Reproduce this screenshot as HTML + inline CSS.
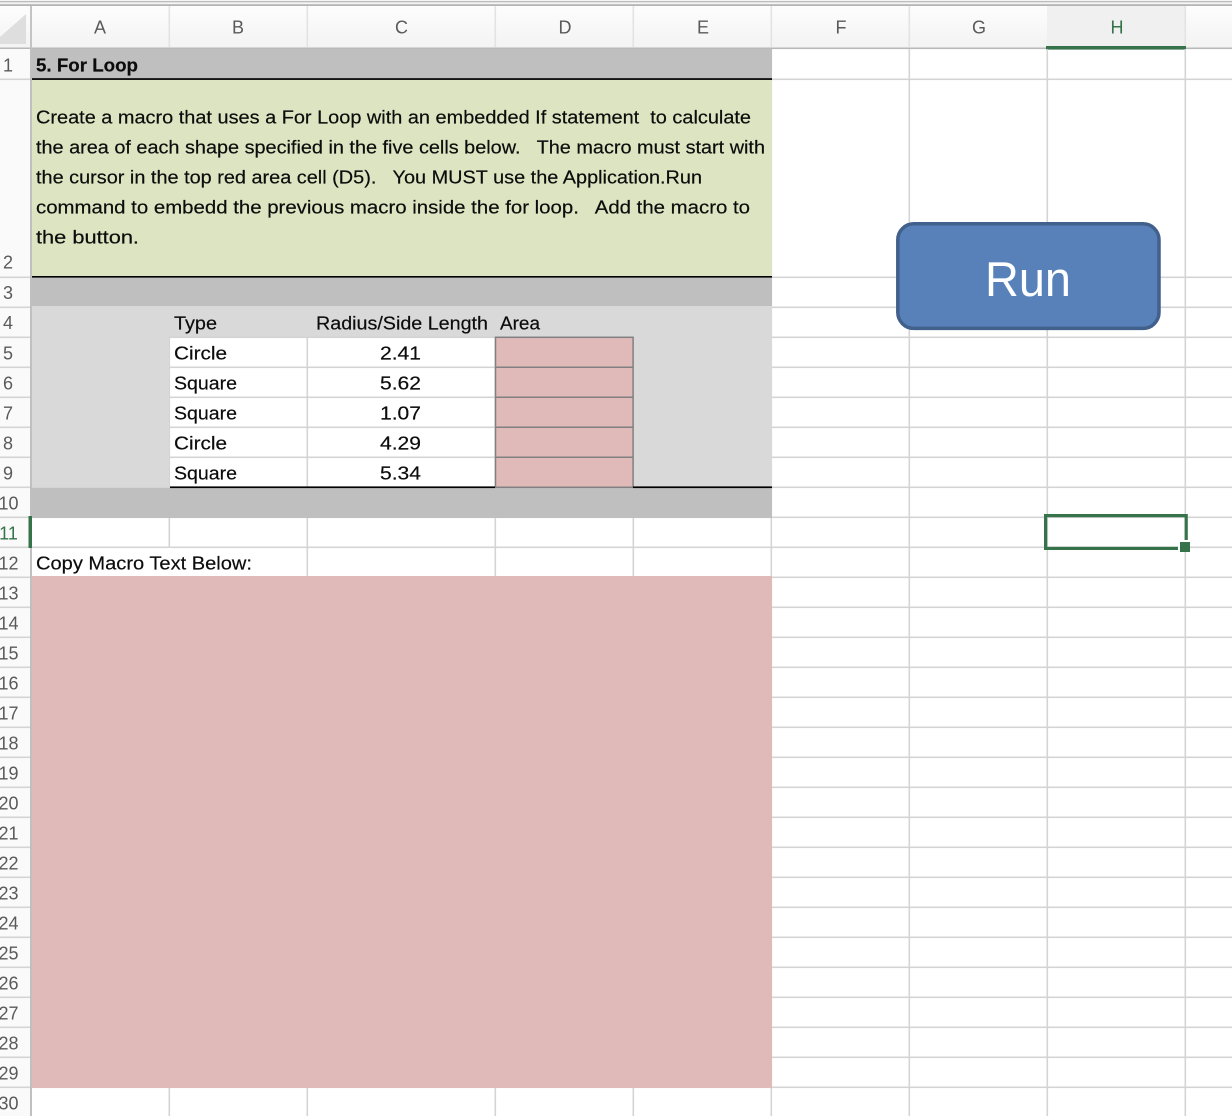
<!DOCTYPE html>
<html><head><meta charset="utf-8"><title>For Loop</title>
<style>
html,body{margin:0;padding:0;background:#fff;width:1232px;height:1116px;overflow:hidden}
svg{display:block}
text{font-family:"Liberation Sans",sans-serif;font-size:18px;fill:#111;white-space:pre;transform:translateY(-.6px);stroke:currentColor;stroke-width:0}
.b{fill:#0c0c0c;stroke:#0c0c0c;stroke-width:.18px}
.h{fill:#5a5a5a;text-anchor:middle}
.n{fill:#5a5a5a;text-anchor:middle}
</style></head><body>
<svg width="1232" height="1116" viewBox="0 0 1232 1116" xmlns="http://www.w3.org/2000/svg">
<defs><linearGradient id="hd" x1="0" y1="0" x2="0" y2="1"><stop offset="0" stop-color="#fdfdfd"/><stop offset="1" stop-color="#f3f3f3"/></linearGradient></defs>
<!-- top chrome -->
<rect x="0" y="0" width="1232" height="6" fill="#f4f4f4"/>
<rect x="0" y="1" width="1232" height="1.3" fill="#bdbdbd"/>
<rect x="0" y="4.3" width="1232" height="1.6" fill="#adadad"/>
<!-- column header -->
<rect x="0" y="6" width="1232" height="42" fill="url(#hd)"/>
<rect x="1047" y="6" width="138.5" height="41" fill="#f0f0f0"/>
<path d="M26 14V44H0V37Z" fill="#dedede"/>
<g fill="#e3e3e3">
<rect x="168.5" y="6" width="1.6" height="41"/><rect x="306.5" y="6" width="1.6" height="41"/><rect x="494.5" y="6" width="1.6" height="41"/><rect x="632.5" y="6" width="1.6" height="41"/><rect x="770.5" y="6" width="1.6" height="41"/><rect x="908.5" y="6" width="1.6" height="41"/><rect x="1184.5" y="6" width="1.6" height="41"/>
</g>
<rect x="0" y="47.5" width="1232" height="1.6" fill="#b8b8b8"/>
<rect x="1046" y="46" width="140" height="3.6" fill="#36734a"/>
<rect x="30" y="6" width="2" height="42" fill="#c4c4c4"/>
<g class="hh">
<text class="h" x="100" y="34">A</text><text class="h" x="238" y="34">B</text><text class="h" x="401.5" y="34">C</text><text class="h" x="565" y="34">D</text><text class="h" x="703" y="34">E</text><text class="h" x="841" y="34">F</text><text class="h" x="979" y="34">G</text><text class="h" x="1117" y="34" style="fill:#36734a">H</text>
</g>
<!-- row header -->
<rect x="0" y="49" width="30" height="1067" fill="#fafafa"/>
<!-- grid horizontal -->
<g fill="#d4d4d4">
<rect x="0" y="78.5" width="1232" height="1.6"/><rect x="0" y="276.5" width="1232" height="1.6"/><rect x="0" y="306.5" width="1232" height="1.6"/><rect x="0" y="336.5" width="1232" height="1.6"/><rect x="0" y="366.5" width="1232" height="1.6"/><rect x="0" y="396.5" width="1232" height="1.6"/><rect x="0" y="426.5" width="1232" height="1.6"/><rect x="0" y="456.5" width="1232" height="1.6"/><rect x="0" y="486.5" width="1232" height="1.6"/><rect x="0" y="516.5" width="1232" height="1.6"/><rect x="0" y="546.5" width="1232" height="1.6"/><rect x="0" y="576.5" width="1232" height="1.6"/><rect x="0" y="606.5" width="1232" height="1.6"/><rect x="0" y="636.5" width="1232" height="1.6"/><rect x="0" y="666.5" width="1232" height="1.6"/><rect x="0" y="696.5" width="1232" height="1.6"/><rect x="0" y="726.5" width="1232" height="1.6"/><rect x="0" y="756.5" width="1232" height="1.6"/><rect x="0" y="786.5" width="1232" height="1.6"/><rect x="0" y="816.5" width="1232" height="1.6"/><rect x="0" y="846.5" width="1232" height="1.6"/><rect x="0" y="876.5" width="1232" height="1.6"/><rect x="0" y="906.5" width="1232" height="1.6"/><rect x="0" y="936.5" width="1232" height="1.6"/><rect x="0" y="966.5" width="1232" height="1.6"/><rect x="0" y="996.5" width="1232" height="1.6"/><rect x="0" y="1026.5" width="1232" height="1.6"/><rect x="0" y="1056.5" width="1232" height="1.6"/><rect x="0" y="1086.5" width="1232" height="1.6"/>
</g>
<!-- grid vertical -->
<g fill="#d4d4d4">
<rect x="168.5" y="49" width="1.6" height="1067"/><rect x="306.5" y="49" width="1.6" height="1067"/><rect x="494.5" y="49" width="1.6" height="1067"/><rect x="632.5" y="49" width="1.6" height="1067"/><rect x="770.5" y="49" width="1.6" height="1067"/><rect x="908.5" y="49" width="1.6" height="1067"/><rect x="1046.5" y="49" width="1.6" height="1067"/><rect x="1184.5" y="49" width="1.6" height="1067"/>
</g>
<!-- row header right border -->
<rect x="30" y="48" width="2" height="1068" fill="#c0c0c0"/>
<!-- hide gridline in row 12 under overflow text -->
<rect x="168" y="548" width="3" height="28" fill="#fff"/>
<!-- filled cells -->
<rect x="31" y="49" width="741" height="29.5" fill="#bfbfbf"/>
<rect x="32" y="80" width="740" height="196" fill="#dce4c1"/>
<rect x="31" y="277.5" width="741" height="28.8" fill="#bfbfbf"/>
<rect x="32" y="306" width="740" height="30.5" fill="#d9d9d9"/>
<rect x="32" y="336" width="137" height="151" fill="#d9d9d9"/>
<rect x="633" y="336" width="139" height="151" fill="#d9d9d9"/>
<rect x="31" y="488" width="741" height="30" fill="#bfbfbf"/>
<rect x="32" y="576" width="740" height="512" fill="#e0b9b9"/>
<!-- area cells -->
<rect x="495.5" y="337.3" width="137.6" height="150" fill="#e0b9b9" stroke="#808080" stroke-width="1.5"/>
<g fill="#808080"><rect x="495" y="366.5" width="138" height="1.5"/><rect x="495" y="396.5" width="138" height="1.5"/><rect x="495" y="426.5" width="138" height="1.5"/><rect x="495" y="456.5" width="138" height="1.5"/></g>
<!-- black rules -->
<g fill="#000">
<rect x="32" y="78.2" width="740" height="1.7"/>
<rect x="32" y="276" width="740" height="1.6"/>
<rect x="170" y="486.4" width="325" height="1.7"/>
<rect x="633" y="486.4" width="139" height="1.7"/>
</g>
<!-- sheet text -->
<text class="b" x="36" y="72" style="font-weight:bold" textLength="102" lengthAdjust="spacingAndGlyphs">5. For Loop</text>
<text class="b" x="36" y="124" textLength="715" lengthAdjust="spacingAndGlyphs">Create a macro that uses a For Loop with an embedded If statement  to calculate</text>
<text class="b" x="36" y="154" textLength="729" lengthAdjust="spacingAndGlyphs">the area of each shape specified in the five cells below.   The macro must start with</text>
<text class="b" x="36" y="184" textLength="666" lengthAdjust="spacingAndGlyphs">the cursor in the top red area cell (D5).   You MUST use the Application.Run</text>
<text class="b" x="36" y="214" textLength="714" lengthAdjust="spacingAndGlyphs">command to embedd the previous macro inside the for loop.   Add the macro to</text>
<text class="b" x="36" y="244" textLength="103" lengthAdjust="spacingAndGlyphs">the button.</text>
<text class="b" x="174" y="330" textLength="43" lengthAdjust="spacingAndGlyphs">Type</text>
<text class="b" x="316" y="330" textLength="172" lengthAdjust="spacingAndGlyphs">Radius/Side Length</text>
<text class="b" x="500" y="330" textLength="40" lengthAdjust="spacingAndGlyphs">Area</text>
<text class="b" x="174" y="360" textLength="53" lengthAdjust="spacingAndGlyphs">Circle</text>
<text class="b" x="174" y="390" textLength="63" lengthAdjust="spacingAndGlyphs">Square</text>
<text class="b" x="174" y="420" textLength="63" lengthAdjust="spacingAndGlyphs">Square</text>
<text class="b" x="174" y="450" textLength="53" lengthAdjust="spacingAndGlyphs">Circle</text>
<text class="b" x="174" y="480" textLength="63" lengthAdjust="spacingAndGlyphs">Square</text>
<text class="b" x="380" y="360" textLength="41" lengthAdjust="spacingAndGlyphs">2.41</text>
<text class="b" x="380" y="390" textLength="41" lengthAdjust="spacingAndGlyphs">5.62</text>
<text class="b" x="380" y="420" textLength="41" lengthAdjust="spacingAndGlyphs">1.07</text>
<text class="b" x="380" y="450" textLength="41" lengthAdjust="spacingAndGlyphs">4.29</text>
<text class="b" x="380" y="480" textLength="41" lengthAdjust="spacingAndGlyphs">5.34</text>
<text class="b" x="36" y="570" textLength="216" lengthAdjust="spacingAndGlyphs">Copy Macro Text Below:</text>
<!-- row numbers -->
<text class="n" x="8" y="72">1</text><text class="n" x="8" y="269">2</text><text class="n" x="8" y="299.5">3</text><text class="n" x="8" y="329.5">4</text><text class="n" x="8" y="360">5</text><text class="n" x="8" y="390">6</text><text class="n" x="8" y="420">7</text><text class="n" x="8" y="450">8</text><text class="n" x="8" y="480">9</text>
<text class="n" x="8.5" y="510">10</text><text class="n" x="8.5" y="540" style="fill:#36734a">11</text><text class="n" x="8.5" y="570">12</text><text class="n" x="8.5" y="600">13</text><text class="n" x="8.5" y="630">14</text><text class="n" x="8.5" y="660">15</text><text class="n" x="8.5" y="690">16</text><text class="n" x="8.5" y="720">17</text><text class="n" x="8.5" y="750">18</text><text class="n" x="8.5" y="780">19</text><text class="n" x="8.5" y="810">20</text><text class="n" x="8.5" y="840">21</text><text class="n" x="8.5" y="870">22</text><text class="n" x="8.5" y="900">23</text><text class="n" x="8.5" y="930">24</text><text class="n" x="8.5" y="960">25</text><text class="n" x="8.5" y="990">26</text><text class="n" x="8.5" y="1020">27</text><text class="n" x="8.5" y="1050">28</text><text class="n" x="8.5" y="1080">29</text><text class="n" x="8.5" y="1110">30</text>
<!-- row 11 selected marker -->
<rect x="28.5" y="516" width="3.5" height="32" fill="#36734a"/>
<!-- button -->
<rect x="897.8" y="223.8" width="261.2" height="104.6" rx="16" ry="16" fill="#5881ba" stroke="#41608c" stroke-width="3.5"/>
<text x="985" y="296.5" style="font-size:49px;fill:#fff" textLength="86" lengthAdjust="spacingAndGlyphs">Run</text>
<!-- selection -->
<rect x="1045.6" y="515.6" width="140.6" height="32.8" fill="none" stroke="#36734a" stroke-width="3.2"/>
<rect x="1178" y="540" width="12" height="12" fill="#fff"/>
<rect x="1180" y="542" width="10" height="10" fill="#36734a"/>
</svg>
</body></html>
